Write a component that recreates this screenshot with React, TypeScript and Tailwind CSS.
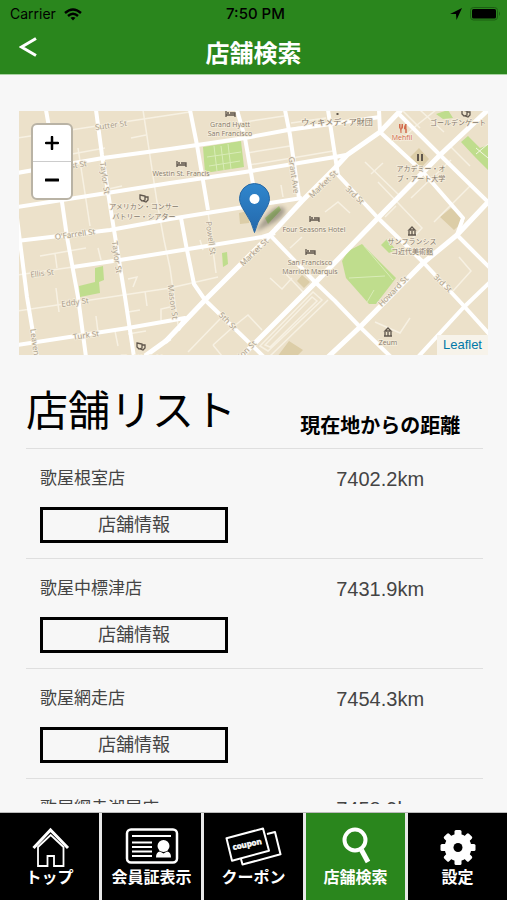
import React from 'react';

interface Store {
    name: string;
    distance: string;
}

interface MapLabel {
    text: string;
    x: number;
    y: number;
    rotate?: number;
    size?: number;
}

const STORES: Store[] = [
    { name: '歌屋根室店', distance: '7402.2km' },
    { name: '歌屋中標津店', distance: '7431.9km' },
    { name: '歌屋網走店', distance: '7454.3km' },
    { name: '歌屋網走湖尾店', distance: '7458.9km' },
];

const MAJOR_ROADS = [
    'M165 342 L205 300 L275 230 L302 201 L335 168 L347 155 L380 132 L401 110',
    'M145 356 L170 338',
    'M490 108 L440 155 L378 218 L315 283 L241 357',
    'M490 200 L457 235 L423 263 L360 327 L328 357',
];

const ROADS = [
    'M46 110 L62 202 L67 237 L78 297 L86 357',
    'M96 110 L102 155 L114 230 L125 297 L134 357',
    'M17 218 L27 297 L37 357',
    'M17 173 L103 158 L170 149 L245 138 L288 130 L380 117',
    'M17 207 L107 193 L170 183 L245 172 L335 157 L346 155',
    'M17 241 L110 230 L170 219 L238 208 L302 198',
    'M73 267 L120 260 L170 252 L262 237 L275 233',
    'M17 345 L128 328 L185 318 L178 330',
    'M190 110 L197 145 L208 210',
    'M181 218 L186 245 L194 284 L205 300 L264 357',
    'M237 110 L245 138 L254 190',
    'M285 110 L290 135 L299 198',
    'M328 110 L338 175 L378 218 L423 262 L463 305 L490 335',
    'M379 110 L380 132 L423 172 L463 218 L457 235 L490 268',
    'M397 112 L440 155 L490 204',
    'M270 235 L315 282 L335 301 L360 327 L391 357',
    'M490 282 L463 308 L418 357',
];

const MINOR_ROADS = [
    'M17 138 L97 126 L170 115 L190 112',
    'M143 110 L157 202 L164 240 L170 268 L178 325',
    'M17 275 L73 267',
    'M17 311 L170 288 L218 277',
    'M208 212 L216 273',
    'M78 148 L90 226',
    'M72 154 L105 148',
    'M40 256 L86 248 M55 253 L57 268 M98 248 L101 260',
    'M56 288 L59 312 M96 316 L98 332 M128 279 L137 277 L133 287',
    'M128 312 L140 310 M145 291 L147 306 M161 320 L161 309 L170 307 M128 334 L146 331 M115 331 L118 346',
    'M247 153 L290 146 M249 165 L292 158 L333 151',
    'M291 123 L326 118 M245 122 L284 116',
    'M365 162 L400 196 M378 182 L422 228 L410 241 M385 217 L396 206',
    'M400 141 L417 125 L436 110 M411 198 L451 160 M434 222 L470 186 M420 110 L444 132',
    'M402 110 L420 128 M449 145 L470 166 M371 174 L383 163',
    'M270 278 L282 289 L292 278 M285 273 L303 292 M290 248 L302 237',
    'M233 327 L248 315 L262 330 M213 345 L233 327 M188 352 L220 319 M213 345 L222 356',
    'M459 257 L471 271 L453 291',
    'M366 318 L386 300 M375 322 L400 333 L410 318',
    'M281 130 L300 127 M281 185 L283 197',
    'M325 212 L338 202 L350 213',
    'M200 240 L203 250 M102 128 L112 126 M131 138 L146 135 M104 190 L122 186',
];

const MAP_LABELS: MapLabel[] = [
    { text: 'Sutter St', x: 111, y: 125, rotate: -8 },
    { text: 'Post St', x: 74, y: 165, rotate: -8 },
    { text: 'Taylor St', x: 105, y: 178, rotate: 82 },
    { text: "O'Farrell St", x: 75, y: 234, rotate: -8 },
    { text: 'Ellis St', x: 42, y: 273, rotate: -7 },
    { text: 'Taylor St', x: 117, y: 257, rotate: 82 },
    { text: 'Eddy St', x: 75, y: 302, rotate: -8 },
    { text: 'Turk St', x: 86, y: 335, rotate: -8 },
    { text: 'Leaven', x: 35, y: 342, rotate: 82 },
    { text: 'Mason St', x: 173, y: 302, rotate: 82 },
    { text: 'Powell St', x: 211, y: 238, rotate: 82 },
    { text: 'Grant Ave', x: 294, y: 175, rotate: 82 },
    { text: 'Market St', x: 323, y: 184, rotate: -44 },
    { text: 'Market St', x: 254, y: 252, rotate: -44 },
    { text: '5th St', x: 228, y: 321, rotate: 45 },
    { text: 'Mission St', x: 241, y: 355, rotate: -44 },
    { text: '3rd St', x: 355, y: 195, rotate: 44 },
    { text: '3rd St', x: 443, y: 283, rotate: 44 },
    { text: 'Howard St', x: 393, y: 291, rotate: -46 },
];

const PLACE_LABELS: MapLabel[] = [
    { text: 'Grand Hyatt', x: 230, y: 127 },
    { text: 'San Francisco', x: 230, y: 136 },
    { text: 'Westin St. Francis', x: 181, y: 176 },
    { text: 'Four Seasons Hotel', x: 314, y: 232 },
    { text: 'San Francisco', x: 310, y: 265 },
    { text: 'Marriott Marquis', x: 310, y: 274 },
    { text: 'Zeum', x: 388, y: 345 },
    { text: 'ウィキメディア財団', x: 337, y: 125, size: 8 },
    { text: 'ゴールデンゲート', x: 458, y: 125, size: 7 },
    { text: 'アメリカン・コンサー', x: 144, y: 209, size: 7 },
    { text: 'バトリー・シアター', x: 144, y: 219, size: 7 },
    { text: 'アカデミー・オ', x: 421, y: 171, size: 7 },
    { text: 'ブ・アート大学', x: 421, y: 181, size: 7 },
    { text: 'サンフランシス', x: 412, y: 244, size: 7 },
    { text: 'コ近代美術館', x: 412, y: 254, size: 7 },
    { text: 'The Warfield', x: 142, y: 360 },
];

const HOTELS = [[230, 114], [181, 164], [314, 219], [310, 252]];
const MUSEUMS = [[412, 231], [388, 332]];
const THEATERS = [[144, 198], [141, 346], [466, 113]];

const StoreMap: React.FC = () => (
    <svg viewBox="19 111 469 244" preserveAspectRatio="xMidYMid slice" className="block w-full h-[244px] bg-[#ece1ca]" aria-label="地図">
        <defs>
            <linearGradient id="pin" x1="0" y1="0" x2="0" y2="1">
                <stop offset="0" stopColor="#2f86cd" />
                <stop offset="1" stopColor="#2468ab" />
            </linearGradient>
            <filter id="shadow" x="-50%" y="-50%" width="200%" height="200%">
                <feGaussianBlur stdDeviation="2" />
            </filter>
        </defs>
        <g fill="#bfdd8d">
            <path d="M203 147 L241 141 L244 167 L205 173 Z" />
            <path d="M95 268 L103 266 L104 280 L99 282 L100 293 L80 297 L79 286 L95 282 Z" />
            <path d="M342 261 L348 251 L362 244 L396 278 L376 304 L369 304 L346 278 Z" />
            <path d="M222 253 L227 252 L228 264 L223 267 Z" />
            <path d="M381 245 L387 239 L396 250 L389 253 Z" />
            <path d="M265 218 L279 206 L281 210 L268 224 Z" />
            <path d="M436 114 L448 110 L453 118 L443 119 Z M461 142 L468 136 L480 148 L488 145 L488 170 L474 156 Z" />
        </g>
        <g fill="#dccda7">
            <path d="M440 217 L451 208 L465 220 L454 230 Z M297 281 L302 275 L310 282 L304 288 Z M277 357 L289 341 L303 350 L296 357 Z M410 157 L419 148 L429 159 L421 168 Z M239 213 L252 210 L249 223 L240 224 Z" />
        </g>
        <g fill="none" stroke="#d9ecb8" strokeWidth="1">
            <path d="M207 157 L241 152 M209 166 L240 161 M214 146 L217 171 M228 144 L231 169 M221 146 L224 170 M364 246 L393 280 M349 278 L385 276 M367 302 L374 290" />
            <path d="M476 148 L488 158 M476 154 L488 144" stroke="#f3f6e2" />
        </g>
        <g fill="none" stroke="#f7f1e3" strokeWidth="1.5">
            {MINOR_ROADS.map(d => <path key={d} d={d} />)}
            <path d="M260 346 L313 292 L322 300 L268 351 Z M265 345 L312 297 L317 301 L270 347 Z M269 357 L328 300" />
        </g>
        <g fill="none" stroke="#fff" strokeWidth="4" strokeLinejoin="round">
            {ROADS.map(d => <path key={d} d={d} />)}
        </g>
        <g fill="none" stroke="#fff" strokeWidth="5" strokeLinejoin="round">
            {MAJOR_ROADS.map(d => <path key={d} d={d} />)}
        </g>
        <g className="font-['Open_Sans','Noto_Sans_CJK_JP',sans-serif]" textAnchor="middle" stroke="#f5eddc" strokeWidth="1.5" paintOrder="stroke">
            {MAP_LABELS.map(l => (
                <text key={`${l.text}${l.x}`} x={l.x} y={l.y} dy="3" fontSize="8" fill="#a89c8b" transform={`rotate(${l.rotate} ${l.x} ${l.y})`}>{l.text}</text>
            ))}
            {PLACE_LABELS.map(l => (
                <text key={`${l.text}${l.y}`} x={l.x} y={l.y} fontSize={l.size || 7} fill="#85796b">{l.text}</text>
            ))}
            <text x="402" y="140" fontSize="7" fill="#d2694a">Mehfil</text>
        </g>
        <g stroke="#5f564c" strokeWidth="1.3" fill="none">
            {HOTELS.map(([x, y]) => (
                <path key={`${x}-${y}`} d={`M${x - 4} ${y - 3} v6 M${x - 4} ${y + 1} h9 v2 M${x - 3} ${y - 1} h2 M${x} ${y - 1} h5 v2`} />
            ))}
            {MUSEUMS.map(([x, y]) => (
                <path key={`${x}-${y}`} d={`M${x - 3} ${y - 1} l3 -3 l3 3 Z M${x - 3} ${y} v4 M${x} ${y} v4 M${x + 3} ${y} v4 M${x - 4} ${y + 4} h8`} />
            ))}
            {THEATERS.map(([x, y]) => (
                <path key={`${x}-${y}`} d={`M${x - 4} ${y - 3} l5 1 v4 l-3 1 l-2 -2 Z M${x + 1} ${y - 1} h3 v3 l-2 2 l-3 -1`} />
            ))}
            <path d="M418 154 v7 M422 154 v7" strokeWidth="2" />
            <path d="M337.500 113 v2" strokeWidth="2" />
        </g>
        <path d="M399.500 124 v3 q0 2 1.500 2 v4 M402.500 124 v3 q0 2 -1.500 2 M401 124 v4 M406 124 q-2 2 -1.500 5 h1.500 v4 Z" fill="#d2694a" stroke="#d2694a" strokeWidth="1" />
        <path d="M255 232 L266 216 Q276 204 284 208 Q288 213 275 222 Z" fill="#000" opacity="0.3" filter="url(#shadow)" />
        <path d="M254.500 232.500 Q252 222 245 212 Q239.500 204 239.500 198.500 A15 15 0 0 1 269.500 198.500 Q269.500 204 264 212 Q257 222 254.500 232.500 Z" fill="url(#pin)" stroke="#2668a5" strokeWidth="1" />
        <circle cx="254.500" cy="199" r="5" fill="#fff" />
    </svg>
);

const HomeIcon: React.FC = () => (
    <svg viewBox="22 824 56 44" className="w-14 h-11" fill="none" stroke="#fff">
        <path d="M33.500 848 L50.500 830 L68 848" strokeWidth="3" />
        <path d="M38 847 V866 H47.500 V856 H54 V866 H63.500 V847 L50.700 835 Z" strokeWidth="1.800" />
    </svg>
);

const CardIcon: React.FC = () => (
    <svg viewBox="125 824 56 44" className="w-14 h-11" fill="none" stroke="#fff">
        <rect x="128" y="829.500" width="50" height="33" rx="4" strokeWidth="2.500" />
        <path d="M133 836 H172 M133 842.500 H153 M133 847 H153 M133 851.500 H153 M133 856 H153" strokeWidth="1.800" />
        <circle cx="164.500" cy="846" r="6" fill="#fff" stroke="none" />
        <path d="M157 857.500 Q157 852 161 851.500 L164.500 853.500 L168 851.500 Q172 852 172 857.500 Z" fill="#fff" stroke="none" />
    </svg>
);

const CouponIcon: React.FC = () => (
    <svg viewBox="226 824 58 44" className="w-[58px] h-11" fill="none" stroke="#fff" strokeWidth="2" strokeLinejoin="round">
        <path d="M227.500 838.300 L264 828.500 L270 850.700 L233 860.700 Z" />
        <path d="M268 834 L276 832 L281.500 854.300 L243.500 864.500 L242 859" />
        <text x="248" y="847" textAnchor="middle" transform="rotate(-12 248 844)" className="font-['Open_Sans',sans-serif] font-bold" fontSize="8" fill="#fff" strokeWidth="0.500">coupon</text>
    </svg>
);

const SearchIcon: React.FC = () => (
    <svg viewBox="327 824 56 44" className="w-14 h-11" fill="none" stroke="#fff">
        <circle cx="354" cy="840" r="10.500" strokeWidth="4" />
        <path d="M360.500 850 L367 862" strokeWidth="5" />
    </svg>
);

const GearIcon: React.FC = () => (
    <svg viewBox="-28 -23.500 56 44" className="w-14 h-11">
        {[0, 45, 90, 135].map(angle => (
            <rect key={angle} x="-3.500" y="-17.500" width="7" height="35" rx="1.500" fill="#fff" transform={`rotate(${angle})`} />
        ))}
        <circle r="9" fill="none" stroke="#fff" strokeWidth="9" />
        <circle r="4.500" fill="#000" />
    </svg>
);

const NAV_ITEMS = [
    { label: 'トップ', href: '#top', icon: HomeIcon },
    { label: '会員証表示', href: '#card', icon: CardIcon },
    { label: 'クーポン', href: '#coupon', icon: CouponIcon },
    { label: '店舗検索', href: '#search', icon: SearchIcon, active: true },
    { label: '設定', href: '#settings', icon: GearIcon },
];

const StatusBar: React.FC = () => (
    <div className="grid grid-cols-3 items-center h-7 pl-2.5 pr-1.5 text-black font-['Inter',sans-serif] text-sm">
        <div className="flex items-center gap-2">
            Carrier
            <svg viewBox="0 0 18 13" className="w-[18px] h-[13px]" fill="none" stroke="#000" strokeWidth="2.400">
                <path d="M1 5 Q9 -2 17 5" />
                <path d="M4 8 Q9 3.500 14 8" />
                <path d="M6.500 9.800 Q9 8 11.500 9.800 L9 12.500 Z" fill="#000" stroke="none" />
            </svg>
        </div>
        <div className="text-center text-[15px] font-medium">7:50 PM</div>
        <div className="flex items-center justify-end gap-2">
            <svg viewBox="0 0 12 12" className="w-3 h-3"><path d="M0 6 L12 0 L6.500 12 L6 6 Z" /></svg>
            <svg viewBox="0 0 31 14" className="w-[31px] h-[14px]">
                <rect x="0.500" y="0.500" width="27" height="12.500" rx="3" fill="none" stroke="#1c5f13" />
                <rect x="2" y="2" width="24" height="9.500" rx="1.500" />
                <path d="M29 4.500 Q31 6.500 29 9 Z" fill="#1c5f13" />
            </svg>
        </div>
    </div>
);

const App: React.FC = () => {
    return (
        <div className="flex flex-col h-screen bg-[#f7f7f7] font-['Liberation_Sans','Noto_Sans_CJK_JP',sans-serif] text-black">
            <header className="shrink-0 bg-[#2a861d] border-b border-[#a9d3a2]">
                <StatusBar />
                <div className="grid grid-cols-[40px_1fr_40px] items-center h-[46px] px-2">
                    <button aria-label="戻る" className="flex justify-center pb-2">
                        <svg viewBox="0 0 18 20" className="w-[18px] h-5" fill="none" stroke="#fff" strokeWidth="3"><path d="M17 1.500 L2.500 10 L17 18.500" /></svg>
                    </button>
                    <h1 className="pt-1.5 text-center text-white text-2xl leading-none font-bold">店舗検索</h1>
                </div>
            </header>

            <main className="flex-1 min-h-0 overflow-hidden mb-2">
                <div className="relative mx-[19px] mt-9">
                    <StoreMap />
                    <div className="absolute left-3 top-3 flex flex-col w-[42px] rounded-md border-2 border-[#b9b3a5] bg-white overflow-hidden">
                        <button aria-label="拡大" className="flex items-center justify-center h-[37px] border-b border-[#ccc]">
                            <svg viewBox="0 0 14 14" className="w-3.5 h-3.5" stroke="#000" strokeWidth="2.500" strokeLinecap="round"><path d="M1 7 H13 M7 1 V13" /></svg>
                        </button>
                        <button aria-label="縮小" className="flex items-center justify-center h-9">
                            <svg viewBox="0 0 14 14" className="w-3.5 h-3.5" stroke="#000" strokeWidth="3" strokeLinecap="round"><path d="M1 7 H13" /></svg>
                        </button>
                    </div>
                    <a href="#leaflet" className="absolute right-0 bottom-0 bg-[#f7f3ea] px-1.5 text-[13px] leading-5 text-[#0078a8]">Leaflet</a>
                </div>

                <div className="pl-[26px] pr-6 mt-7">
                    <table className="w-full table-fixed border-collapse">
                        <thead>
                            <tr className="h-[65px] border-b border-[#dfdfdf]">
                                <th className="w-[55%] p-0 pb-2 text-left align-bottom font-normal text-[42px] leading-[56px] whitespace-nowrap">店舗リスト</th>
                                <th className="p-0 pb-2 align-bottom font-bold text-xl leading-7 whitespace-nowrap">現在地からの距離</th>
                            </tr>
                        </thead>
                        <tbody>
                            {STORES.map(store => (
                                <tr key={store.name} className="h-[110px] border-b border-[#dfdfdf] align-top text-[#444]">
                                    <td className="p-0 pl-3.5 pt-4">
                                        <p className="text-[17px] leading-7">{store.name}</p>
                                        <button className="block mt-3.5 w-[188px] h-9 border-[3px] border-black text-[18px] leading-7">店舗情報</button>
                                    </td>
                                    <td className="p-0 pt-4 text-center text-xl leading-7">{store.distance}</td>
                                </tr>
                            ))}
                        </tbody>
                    </table>
                </div>
            </main>

            <nav className="shrink-0 grid grid-cols-5 gap-[3px] border-t border-[#bbb] bg-[#e8e8e8] text-white">
                {NAV_ITEMS.map(({ label, href, icon: Icon, active }) => (
                    <a key={label} href={href} className={`flex flex-col items-center h-[87px] pt-[11px] ${active ? 'bg-[#2a861d]' : 'bg-black'}`}>
                        <Icon />
                        <span className="text-base leading-5 font-bold whitespace-nowrap">{label}</span>
                    </a>
                ))}
            </nav>
        </div>
    );
};

export default App;
